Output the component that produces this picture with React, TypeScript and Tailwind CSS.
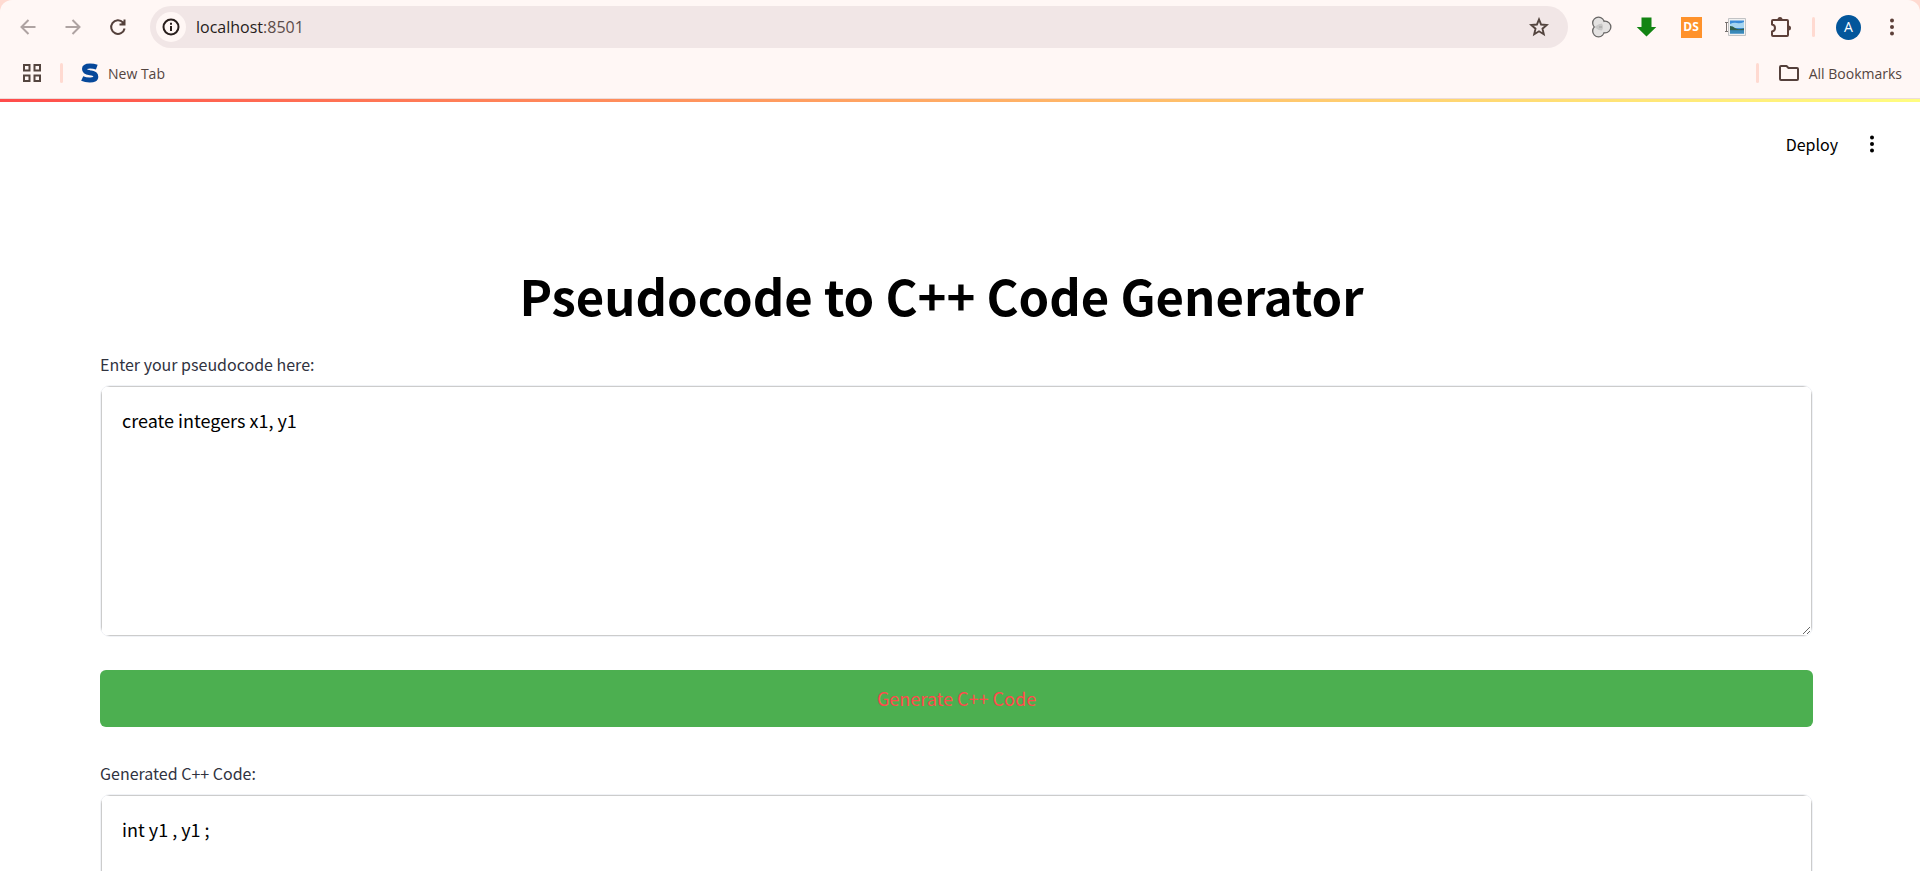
import React from "react";

function IconButton({ label, children, className = "" }: { label: string; children: React.ReactNode; className?: string }) {
  return (
    <button type="button" aria-label={label} className={`flex h-7 w-7 shrink-0 items-center justify-center ${className}`}>
      {children}
    </button>
  );
}

function Arrow({ back = false }: { back?: boolean }) {
  return (
    <svg width="16" height="16" viewBox="0 0 16 16" fill="none" stroke="#aea3a2" strokeWidth="2">
      {back ? <path d="M15.500 8H2M8.500 1 1.500 8l7 7" /> : <path d="M.5 8H14M7.500 1l7 7-7 7" />}
    </svg>
  );
}

function Dots({ color }: { color: string }) {
  return (
    <svg width="6" height="18" viewBox="0 0 6 18" fill={color}>
      <circle cx="3" cy="2.500" r="2" />
      <circle cx="3" cy="9" r="2" />
      <circle cx="3" cy="15.500" r="2" />
    </svg>
  );
}

function Divider() {
  return <span className="h-5 w-[3px] shrink-0 rounded-sm bg-[#ffdad1]" />;
}

function Toolbar() {
  return (
    <div className="flex items-center pt-[6px] pr-[14px] pl-[14px]">
      <div className="flex items-center gap-[17px]">
        <IconButton label="Back"><Arrow back /></IconButton>
        <IconButton label="Forward"><Arrow /></IconButton>
        <IconButton label="Reload">
          <svg width="18" height="18" viewBox="0 0 18 18" fill="none" stroke="#54403b" strokeWidth="2">
            <path d="M15.600 10.500A6.800 6.800 0 1 1 14 4.500L15.500 6" />
            <path d="M15.500 1.500V6.500H10.500" />
            <path d="M11.500 6.500 15.500 2.500V6.500Z" fill="#54403b" stroke="none" />
          </svg>
        </IconButton>
      </div>
      <div className="ml-[18px] flex h-[42px] flex-1 items-center rounded-full bg-[#f1e6e6] pr-[15px] pl-[6px]">
        <button type="button" aria-label="View site information" className="flex h-[30px] w-[30px] shrink-0 items-center justify-center rounded-full bg-[#fff7f5]">
          <svg width="18" height="18" viewBox="0 0 18 18" fill="none" stroke="#281e1c" strokeWidth="2">
            <circle cx="9" cy="9" r="7.500" />
            <path d="M9 8v5M9 4.800v2" />
          </svg>
        </button>
        <div className="relative ml-[10px] flex-1 text-[16px] leading-6">
          <input aria-label="Address" defaultValue="localhost:8501" className="w-full bg-transparent text-transparent outline-none" />
          <span aria-hidden="true" className="pointer-events-none absolute inset-y-0 left-0 text-[#261c1b]">
            localhost<span className="text-[#5c4c49]">:8501</span>
          </span>
        </div>
        <IconButton label="Bookmark this tab">
          <svg width="20" height="20" viewBox="0 0 20 20" fill="none" stroke="#54453f" strokeWidth="1.900">
            <path d="M10 2.400 12.100 7.500 17.800 8 13.500 11.700 14.800 17.200 10 14.300 5.200 17.200 6.500 11.700 2.200 8 7.900 7.500Z" />
          </svg>
        </IconButton>
      </div>
      <div className="ml-[19px] flex items-center gap-[17px]">
        <IconButton label="Clusters">
          <svg width="21" height="22" viewBox="0 0 21 22">
            <g fill="#e4e2e1" stroke="#686665" strokeWidth="2">
              <circle cx="7.500" cy="7" r="5.500" />
              <circle cx="14" cy="11" r="5.500" />
              <circle cx="7.500" cy="15" r="5.500" />
            </g>
            <g fill="#e4e2e1">
              <circle cx="7.500" cy="7" r="5.200" />
              <circle cx="14" cy="11" r="5.200" />
              <circle cx="7.500" cy="15" r="5.200" />
            </g>
            <path d="M4 10.500q4-3 7-3 2 3.500 0 7-4 0-7-3Z" fill="#c9c8c7" />
            <path d="M8 11h3" stroke="#b4b3b2" strokeWidth="2" />
          </svg>
        </IconButton>
        <IconButton label="Downloader">
          <svg width="21" height="20" viewBox="0 0 21 20">
            <path d="M5.500.5h10V10h4.800L10.500 19.500.7 10h4.800Z" fill="#138413" />
          </svg>
        </IconButton>
        <IconButton label="DS extension">
          <span className="flex h-[21px] w-[21px] items-center justify-center bg-[#ff922b] text-[12px] leading-none font-bold text-white">DS</span>
        </IconButton>
        <IconButton label="Image extension">
          <svg width="22" height="20" viewBox="0 0 22 20">
            <path d="M0 5.500h3M0 14.500h3M1.500 5.500v9" stroke="#77716f" fill="none" />
            <path d="M3.500 1.500h17v17h-17Z" fill="#f1f1f0" stroke="#c2c3c5" />
            <path d="M5 3.500h14v13H5Z" fill="#3a8cd8" />
            <path d="M5 7q4-2 7-1t7-1v6H5Z" fill="#a5d5f1" />
            <path d="M5 9q3 0 5 2t9 .5v2H5Z" fill="#315f4b" />
            <path d="M5 13.500h14v3H5Z" fill="#3989b8" />
          </svg>
        </IconButton>
        <IconButton label="Extensions">
          <svg width="22" height="22" viewBox="0 0 22 22" fill="none" stroke="#5d4039" strokeWidth="2" strokeLinejoin="round">
            <path d="M3 4H17Q18 4 18 5V19Q18 20 17 20H3Q2 20 2 19V15.500Q5 15 5 12T2 8.500V5Q2 4 3 4Z" />
            <path d="M7.500 3.500a2.500 2.500 0 0 1 5 0ZM18.500 9.500a2.500 2.500 0 0 1 0 5Z" fill="#5d4039" stroke="none" />
          </svg>
        </IconButton>
        <Divider />
        <button type="button" aria-label="Profile" className="ml-1 flex h-[25px] w-[25px] shrink-0 items-center justify-center rounded-full bg-[#03569b] text-[14px] leading-none text-white">A</button>
        <IconButton label="Browser menu"><Dots color="#5d4039" /></IconButton>
      </div>
    </div>
  );
}

function BookmarksBar() {
  return (
    <nav aria-label="Bookmarks" className="flex h-[50px] items-center justify-between pr-[18px] pl-[18px] text-[14px] text-[#54453f]">
      <div className="flex items-center">
        <IconButton label="Apps">
          <svg width="18" height="18" viewBox="0 0 18 18" fill="none" stroke="#54453f" strokeWidth="2">
            <path d="M1 1h5.500v5.500H1ZM11.500 1H17v5.500h-5.500ZM1 11.500h5.500V17H1ZM11.500 11.500H17V17h-5.500Z" />
          </svg>
        </IconButton>
        <span className="ml-[14px] flex"><Divider /></span>
        <a href="#new-tab" className="ml-[18px] flex items-center gap-[9px]">
          <svg width="18" height="20" viewBox="0 0 18 20" fill="none" stroke="#06489a" strokeWidth="5">
            <path d="M15.800 4.200Q12.500 3 9 3 3.500 3 3.500 6T9 9.700Q14.800 10.200 14.800 13.700T8.500 17Q4.500 17 1.200 15.500" />
          </svg>
          New Tab
        </a>
      </div>
      <div className="flex items-center">
        <Divider />
        <a href="#all-bookmarks" className="ml-5 flex items-center gap-[10px]">
          <svg width="20" height="16" viewBox="0 0 20 16" fill="none" stroke="#54403b" strokeWidth="2" strokeLinejoin="round">
            <path d="M2 1H7.500L9.500 3H18Q19 3 19 4V14Q19 15 18 15H2Q1 15 1 14V2Q1 1 2 1Z" />
          </svg>
          All Bookmarks
        </a>
      </div>
    </nav>
  );
}

function CodeField({ id, label, value }: { id: string; label: string; value: string }) {
  return (
    <div>
      <label htmlFor={id} className="mb-2 block text-[16px] leading-[26px] text-[#31333f]">{label}</label>
      <div className="overflow-hidden rounded-[10px] border border-[#f0f2f6]">
        <textarea
          id={id}
          defaultValue={value}
          spellCheck={false}
          className="block h-[250px] w-full resize-y rounded-[4px] border border-[#cccccc] bg-white px-5 py-[18px] text-[18px] leading-[30px] text-black outline-none"
        />
      </div>
    </div>
  );
}

export default function App() {
  return (
    <div className="flex h-screen flex-col bg-white">
      <header className="shrink-0 bg-[#ffdad1] font-['Open_Sans','Noto_Sans',sans-serif]">
        <div className="rounded-t-xl border-b border-[#ecdcda] bg-[#fff7f5]">
          <Toolbar />
          <BookmarksBar />
        </div>
      </header>
      <div className="flex-1 overflow-y-auto font-['Noto_Sans_CJK_SC',sans-serif] [scrollbar-width:none]">
        <div className="h-[3px] bg-linear-to-r from-[#ff4b4b] to-[#fffd80]" />
        <div className="flex h-[84px] items-center justify-end gap-5 pr-[34px]">
          <button type="button" className="text-[16px] leading-6 text-black">Deploy</button>
          <IconButton label="Main menu"><Dots color="#000000" /></IconButton>
        </div>
        <main className="pt-[76px] pr-[107px] pb-10 pl-[100px]">
          <h1 className="pr-[30px] text-center text-[49px] leading-[66px] font-bold text-black">Pseudocode to C++ Code Generator</h1>
          <div className="mt-[23px]">
            <CodeField id="pseudocode" label="Enter your pseudocode here:" value="create integers x1, y1" />
          </div>
          <button type="button" className="mt-[33px] mb-[33px] block h-[57px] w-full rounded-md bg-[#4caf50] text-[18px] text-[#ff4b4b]">Generate C++ Code</button>
          <CodeField id="generated" label="Generated C++ Code:" value="int y1 , y1 ;" />
        </main>
      </div>
    </div>
  );
}
